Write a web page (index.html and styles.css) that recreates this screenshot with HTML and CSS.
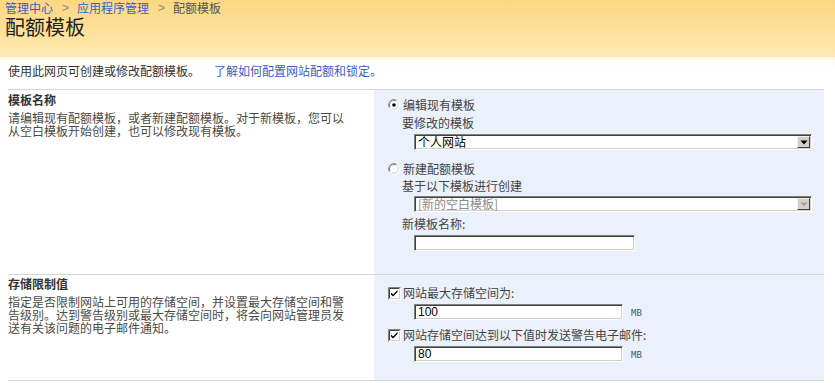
FILE: index.html
```html
<!DOCTYPE html>
<html lang="zh-CN">
<head>
<meta charset="utf-8">
<title>配额模板</title>
<link rel="stylesheet" href="styles.css">
</head>
<body>
<div class="header">
  <div class="crumbs"><a class="crumb" href="#">管理中心</a><span class="sep">&gt;</span><a class="crumb" href="#">应用程序管理</a><span class="sep">&gt;</span><span class="current">配额模板</span></div>
  <h1 class="title">配额模板</h1>
</div>
<div class="intro">使用此网页可创建或修改配额模板。<a class="help" href="#">了解如何配置网站配额和锁定。</a></div>
<div class="main">
  <div class="section">
    <div class="info">
      <div class="info-title">模板名称</div>
      <div class="info-desc">请编辑现有配额模板，或者新建配额模板。对于新模板，您可以从空白模板开始创建，也可以修改现有模板。</div>
    </div>
    <div class="panel panel-one">
      <div class="opt">
        <svg class="radio" width="12" height="12" viewBox="0 0 12 12"><path d="M8.5 1.2A5.4 5.4 0 0 0 1.2 8.5" fill="none" stroke="#808080" stroke-width="1"/><path d="M8 2.2A4.4 4.4 0 0 0 2.2 8" fill="none" stroke="#404040" stroke-width="1"/><circle cx="6" cy="6" r="4" fill="#fff"/><path d="M10.8 3.5A5.4 5.4 0 0 1 3.5 10.8" fill="none" stroke="#fff" stroke-width="1"/><path d="M9.8 4A4.4 4.4 0 0 1 4 9.8" fill="none" stroke="#d4d0c8" stroke-width="1"/><circle cx="6" cy="6" r="1.8" fill="#000"/></svg>
        <span class="opt-label">编辑现有模板</span>
      </div>
      <div class="field-label">要修改的模板</div>
      <div class="select select-wide"><span class="select-text">个人网站</span><span class="select-btn"><svg width="8" height="5" viewBox="0 0 8 5"><path d="M0.5 0.5h7L4 4.5z" fill="#000"/></svg></span></div>
      <div class="opt opt-gap">
        <svg class="radio" width="12" height="12" viewBox="0 0 12 12"><path d="M8.5 1.2A5.4 5.4 0 0 0 1.2 8.5" fill="none" stroke="#808080" stroke-width="1"/><path d="M8 2.2A4.4 4.4 0 0 0 2.2 8" fill="none" stroke="#404040" stroke-width="1"/><circle cx="6" cy="6" r="4" fill="#fff"/><path d="M10.8 3.5A5.4 5.4 0 0 1 3.5 10.8" fill="none" stroke="#fff" stroke-width="1"/><path d="M9.8 4A4.4 4.4 0 0 1 4 9.8" fill="none" stroke="#d4d0c8" stroke-width="1"/></svg>
        <span class="opt-label">新建配额模板</span>
      </div>
      <div class="field-label tight">基于以下模板进行创建</div>
      <div class="select select-wide disabled"><span class="select-text">[新的空白模板]</span><span class="select-btn"><svg width="8" height="5" viewBox="0 0 8 5"><path d="M0.5 0.5h7L4 4.5z" fill="#a0a0a0"/></svg></span></div>
      <div class="field-label gap4">新模板名称:</div>
      <input class="textbox name-box" type="text" value="">
    </div>
  </div>
  <div class="section">
    <div class="info info-two">
      <div class="info-title">存储限制值</div>
      <div class="info-desc">指定是否限制网站上可用的存储空间，并设置最大存储空间和警告级别。达到警告级别或最大存储空间时，将会向网站管理员发送有关该问题的电子邮件通知。</div>
    </div>
    <div class="panel panel-two">
      <div class="opt">
        <svg class="check" width="13" height="13" viewBox="0 0 13 13"><rect x="0" y="0" width="13" height="13" fill="#fff"/><path d="M0.5 12.5V0.5H12.5" fill="none" stroke="#808080"/><path d="M1.5 11.5V1.5H11.5" fill="none" stroke="#404040"/><path d="M1.5 11.5H11.5V1.5" fill="none" stroke="#d4d0c8"/><path d="M3 5.5l2 2 4.5-4.5v2L5 9.5l-2-2z" fill="#000"/></svg>
        <span class="opt-label">网站最大存储空间为:</span>
      </div>
      <div class="size-row"><input class="textbox size-box" type="text" value="100"><span class="unit">MB</span></div>
      <div class="opt opt-gap2">
        <svg class="check" width="13" height="13" viewBox="0 0 13 13"><rect x="0" y="0" width="13" height="13" fill="#fff"/><path d="M0.5 12.5V0.5H12.5" fill="none" stroke="#808080"/><path d="M1.5 11.5V1.5H11.5" fill="none" stroke="#404040"/><path d="M1.5 11.5H11.5V1.5" fill="none" stroke="#d4d0c8"/><path d="M3 5.5l2 2 4.5-4.5v2L5 9.5l-2-2z" fill="#000"/></svg>
        <span class="opt-label">网站存储空间达到以下值时发送警告电子邮件:</span>
      </div>
      <div class="size-row"><input class="textbox size-box" type="text" value="80"><span class="unit">MB</span></div>
    </div>
  </div>
</div>
</body>
</html>
```
FILE: styles.css
```css
html, body {
  margin: 0;
  padding: 0;
  background: #fff;
}
body {
  font-family: "Noto Sans CJK SC", "Liberation Sans", sans-serif;
  font-size: 12px;
  color: #333;
}
a { text-decoration: none; }

.header {
  height: 57px;
  box-sizing: border-box;
  padding: 0 5px;
  background: linear-gradient(#fcd782, #fde9b0);
}
.crumbs {
  line-height: 16px;
  height: 16px;
  color: #3a5fc8;
  display: flex;
  align-items: center;
}
.crumb { color: #3a5fc8; }
.sep {
  color: #888;
  margin: 0 8px 0 9px;
  font-family: "Liberation Sans", sans-serif;
}
.current { color: #555; }
.title {
  margin: 0;
  font-size: 20px;
  font-weight: normal;
  line-height: 22px;
  color: #222;
}

.intro {
  background: linear-gradient(#fffaee, #fff 10px);
  padding: 6px 8px 0;
  height: 26px;
  line-height: 16px;
  color: #333;
}
.help {
  color: #3a5fc8;
  margin-left: 14px;
}

.main {
  margin: 0 11px 0 8px;
  border-top: 1px solid #d6d6d6;
}
.section {
  display: grid;
  grid-template-columns: 366px 1fr;
  border-bottom: 1px solid #d6d6d6;
}
.info {
  padding: 2px 20px 0 0;
}
.info-two { padding-top: 1px; }
.info-title {
  font-weight: bold;
  line-height: 16px;
  color: #333;
}
.info-desc {
  margin-top: 3px;
  line-height: 13px;
  color: #4a4a4a;
  width: 345px;
}
.panel {
  background: #eaf1fb;
  padding-left: 14px;
}
.panel-one { padding-top: 7px; padding-bottom: 23px; }
.panel-two { padding-top: 10px; padding-bottom: 18px; }

.opt {
  display: flex;
  align-items: center;
  height: 16px;
  line-height: 16px;
  color: #444;
}
.opt-gap { margin-top: 11px; }
.opt-gap2 { margin-top: 7px; }
.radio { margin-right: 3px; flex: none; }
.check { margin-right: 2px; flex: none; }
.opt-label { white-space: nowrap; }

.field-label {
  margin: 2px 0 3px 14px;
  line-height: 16px;
  color: #444;
}
.field-label.tight { margin-top: 1px; margin-bottom: 2px; }
.field-label.gap4 { margin-top: 4px; }

.select {
  margin-left: 26px;
  height: 16px;
  box-sizing: border-box;
  display: flex;
  align-items: center;
  background: #fff;
  border: 1px solid;
  border-color: #808080 #fff #fff #808080;
  box-shadow: inset 1px 1px 0 #404040, inset -1px -1px 0 #d4d0c8;
  padding: 0 1px 0 3px;
}
.select-wide { width: 398px; }
.select-text {
  flex: 1;
  line-height: 14px;
  color: #000;
}
.select.disabled .select-text { color: #8a8a8a; }
.select-btn {
  flex: none;
  width: 13px;
  height: 12px;
  box-sizing: border-box;
  background: #d4d0c8;
  border: 1px solid;
  border-color: #f4f4f4 #404040 #404040 #f4f4f4;
  display: flex;
  align-items: center;
  justify-content: center;
}

.textbox {
  display: block;
  margin: 0 0 0 26px;
  height: 16px;
  box-sizing: border-box;
  border: 1px solid;
  border-color: #808080 #fff #fff #808080;
  box-shadow: inset 1px 1px 0 #404040, inset -1px -1px 0 #d4d0c8;
  padding: 0 3px;
  font-family: "Liberation Sans", sans-serif;
  font-size: 12px;
  color: #000;
  background: #fff;
  outline: none;
}
.name-box { width: 221px; }
.size-row {
  display: flex;
  align-items: center;
  margin-top: 3px;
}
.size-box { width: 209px; }
.unit {
  margin-left: 8px;
  font-family: "DejaVu Sans Mono", monospace;
  font-size: 9px;
  color: #555;
  padding-top: 2px;
}
```
